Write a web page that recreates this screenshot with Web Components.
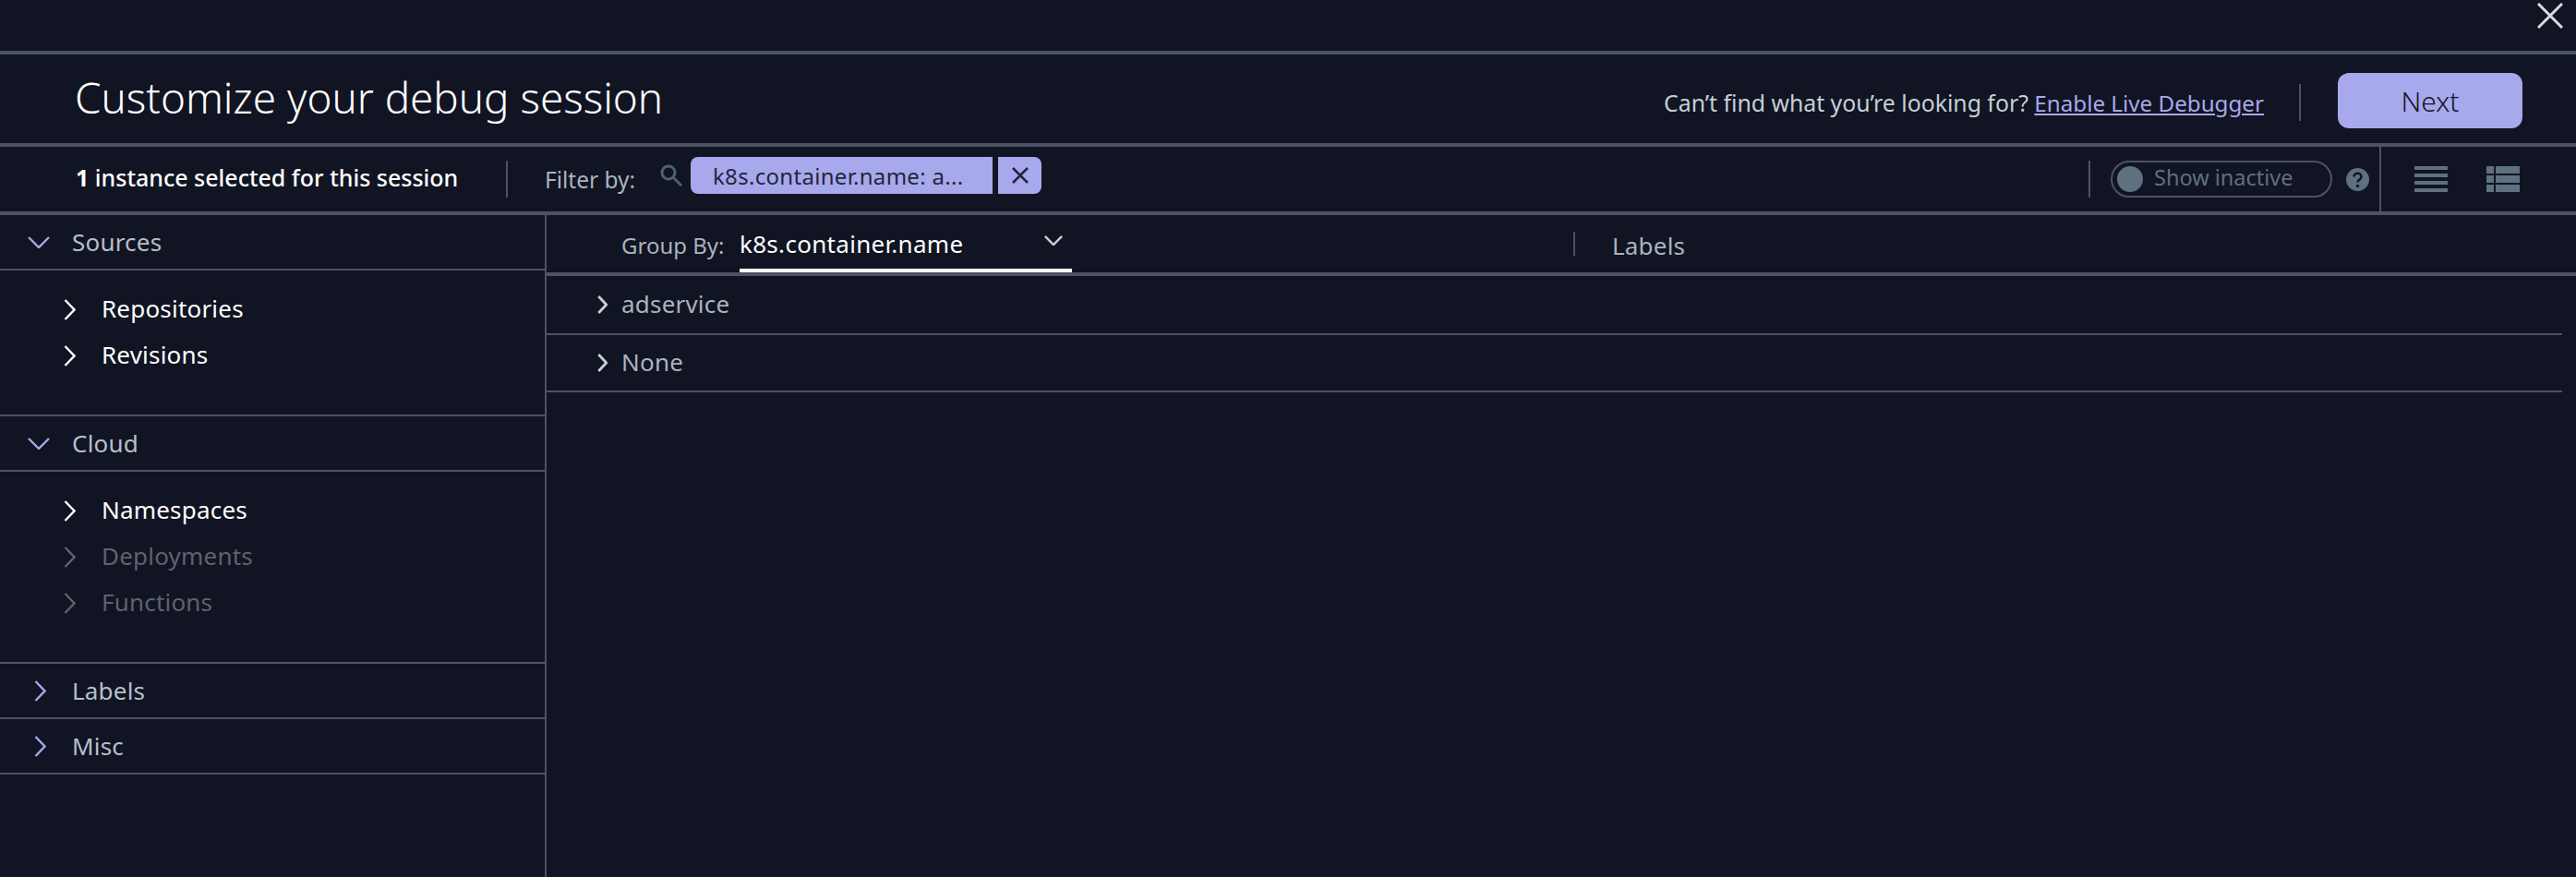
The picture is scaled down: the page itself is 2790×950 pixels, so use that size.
<!DOCTYPE html>
<html lang="en">
<head>
<meta charset="utf-8">
<title>Customize your debug session</title>
<style>
  html, body { margin: 0; height: 100%; background: #111422; overflow: hidden; }
  body { font-family: "Noto Sans", sans-serif; color: #c5cfd6; }
</style>
</head>
<body>
<debug-session></debug-session>

<script>
const chevron = (dir) => dir === "down"
  ? `<svg width="24" height="13" viewBox="0 0 24 13" fill="none" stroke="currentColor" stroke-width="2.400"><path d="M1 1l11 11L23 1"/></svg>`
  : `<svg width="13" height="23" viewBox="0 0 13 23" fill="none" stroke="currentColor" stroke-width="2.400"><path d="M1.500 1l10 10.500-10 10.500"/></svg>`;

class TreeItem extends HTMLElement {
  constructor() {
    super();
    this.attachShadow({mode: "open"});
  }
  connectedCallback() {
    this.shadowRoot.innerHTML = `
    <style>
      :host { display: flex; align-items: center; height: 50px; padding-left: 69px; color: #fff; font-size: 26px; letter-spacing: .2px; }
      :host([disabled]) { color: #5f626f; }
      svg { display: block; margin-right: 28px; }
      span { margin-top: -2px; }
    </style>
    ${chevron("right")}<span><slot></slot></span>`;
  }
}
customElements.define("tree-item", TreeItem);

class SideSection extends HTMLElement {
  constructor() {
    super();
    this.attachShadow({mode: "open"});
  }
  connectedCallback() {
    const open = this.hasAttribute("open");
    this.shadowRoot.innerHTML = `
    <style>
      :host { display: block; }
      .head { display: flex; align-items: center; height: 58px; border-bottom: 2px solid #4d5363; color: #b4c0cb; font-size: 26px; letter-spacing: .2px; box-sizing: content-box; }
      .icon { width: 78px; flex: none; color: #a8a8ec; display: flex; }
      .open .icon svg { margin-left: 30px; }
      .closed .icon svg { margin-left: 37px; }
      .body { padding: 17px 0 39px; border-bottom: 2px solid #4d5363; }
    </style>
    <div class="head ${open ? "open" : "closed"}"><span class="icon">${chevron(open ? "down" : "right")}</span><span>${this.getAttribute("label")}</span></div>
    ${open ? `<div class="body"><slot></slot></div>` : ""}`;
  }
}
customElements.define("side-section", SideSection);

class GroupRow extends HTMLElement {
  constructor() {
    super();
    this.attachShadow({mode: "open"});
  }
  connectedCallback() {
    this.shadowRoot.innerHTML = `
    <style>
      :host { display: flex; align-items: center; height: 62px; margin-right: 15px; padding-left: 55px; border-bottom: 2px solid #4d5363; color: #a9b4bf; font-size: 26px; letter-spacing: .2px; }
      svg { display: block; margin-right: 15px; width: 11px; height: 20px; color: #c5cfd6; stroke-width: 3.400; }
      span { margin-top: -2px; }
    </style>
    ${chevron("right")}<span><slot></slot></span>`;
  }
}
customElements.define("group-row", GroupRow);

class DebugHeader extends HTMLElement {
  constructor() {
    super();
    this.attachShadow({mode: "open"});
  }
  connectedCallback() {
    this.shadowRoot.innerHTML = `
    <style>
      :host { display: flex; align-items: center; height: 96px; padding: 0 58px 0 81px; border-bottom: 4px solid #4d5363; }
      h1 { margin: 0 0 4px; flex: 1; font-size: 45.800px; font-weight: 300; color: #fff; }
      .hint { margin-top: 8px; font-size: 24.800px; color: #c5cfd6; }
      a { color: #a8a8ec; font-size: 24.200px; }
      .sep { width: 2px; height: 40px; margin: 8px 40px 0 38px; background: #4d5363; }
      button { width: 200px; height: 60px; margin-top: 4px; border: 0; border-radius: 12px; background: #a8a8ec; color: #15172a; font: 300 30px "Noto Sans", sans-serif; }
    </style>
    <h1>Customize your debug session</h1>
    <span class="hint">Can’t find what you’re looking for? <a href="#">Enable Live Debugger</a></span>
    <span class="sep"></span>
    <button>Next</button>`;
  }
}
customElements.define("debug-header", DebugHeader);

class DebugToolbar extends HTMLElement {
  constructor() {
    super();
    this.attachShadow({mode: "open"});
  }
  connectedCallback() {
    this.shadowRoot.innerHTML = `
    <style>
      :host { display: flex; align-items: center; height: 70px; padding-left: 82px; border-bottom: 4px solid #4d5363; font-size: 24px; }
      .count { width: 466px; margin-bottom: 4px; color: #fff; font-size: 25px; font-weight: 500; }
      .sep { width: 2px; height: 40px; background: #4d5363; flex: none; }
      .filter { margin-left: 40px; width: 125px; color: #a9b4bf; font-size: 24.500px; }
      .search { display: block; margin: -8px 9px 0 0; }
      .chip { display: flex; align-items: center; height: 40px; margin-top: -8px; background: #a8a8ec; color: #23253b; }
      .name { width: 327px; box-sizing: border-box; padding-left: 24px; border-radius: 8px 0 0 8px; white-space: nowrap; letter-spacing: .3px; }
      .clear { width: 47px; justify-content: center; margin-left: 6px; border-radius: 0 8px 8px 0; }
      .fill { flex: 1; }
      .toggle { display: flex; align-items: center; box-sizing: border-box; width: 240px; height: 40px; margin-left: 22px; padding-left: 5px; border: 2px solid #4d5363; border-radius: 20px; color: #5f7080; font-size: 23.500px; }
      .toggle span:last-child { margin-top: -4px; }
      .knob { width: 28px; height: 28px; margin-right: 12px; border-radius: 50%; background: #5f7080; flex: none; }
      .help { display: block; margin: 0 11px 0 15px; }
      .tall { height: 70px; }
      .views { display: flex; gap: 42px; width: 211px; box-sizing: border-box; padding-left: 36px; }
      .views svg { display: block; }
    </style>
    <span class="count"><b>1</b> instance selected for this session</span>
    <span class="sep"></span>
    <span class="filter">Filter by:</span>
    <svg class="search" width="24" height="24" viewBox="0 0 24 24" fill="none" stroke="#4d6270" stroke-width="3"><circle cx="9" cy="9" r="7"/><path d="M14 14l9 9"/></svg>
    <span class="chip name">k8s.container.name: a...</span>
    <span class="chip clear"><svg width="20" height="20" viewBox="0 0 20 20" fill="none" stroke="#23253b" stroke-width="2.500"><path d="M2 2l16 16M18 2L2 18"/></svg></span>
    <span class="fill"></span>
    <span class="sep"></span>
    <span class="toggle"><span class="knob"></span><span>Show inactive</span></span>
    <svg class="help" width="25" height="25" viewBox="0 0 25 25"><circle cx="12.500" cy="12.500" r="12.500" fill="#5f7080"/><path d="M8.500 9.500c0-5 8-5 8 0 0 3-4 3-4 6" fill="none" stroke="#111422" stroke-width="2.600"/><circle cx="12.500" cy="19.500" r="1.700" fill="#111422"/></svg>
    <span class="sep tall"></span>
    <span class="views">
      <svg width="36" height="28" viewBox="0 0 36 28" fill="#5f7080"><rect width="36" height="4"/><rect y="8" width="36" height="4"/><rect y="16" width="36" height="4"/><rect y="24" width="36" height="4"/></svg>
      <svg width="36" height="28" viewBox="0 0 36 28" fill="#5f7080"><rect width="8" height="8"/><rect x="10" width="26" height="8"/><rect y="10" width="8" height="8"/><rect x="10" y="10" width="26" height="8"/><rect y="20" width="8" height="8"/><rect x="10" y="20" width="26" height="8"/></svg>
    </span>`;
  }
}
customElements.define("debug-toolbar", DebugToolbar);

class GroupTable extends HTMLElement {
  constructor() {
    super();
    this.attachShadow({mode: "open"});
  }
  connectedCallback() {
    this.shadowRoot.innerHTML = `
    <style>
      :host { display: block; flex: 1; font-size: 26px; }
      .head { display: flex; align-items: center; height: 62px; padding-left: 81px; border-bottom: 4px solid #4d5363; }
      .by { width: 128px; margin-top: 3px; color: #a9b4bf; font-size: 24px; }
      .select { display: flex; align-items: center; box-sizing: border-box; width: 360px; height: 62px; padding: 4px 10px 0 0; border-bottom: 4px solid #fff; color: #fff; justify-content: space-between; letter-spacing: .3px; }
      .select svg { display: block; color: #c5cfd6; width: 20px; height: 11px; margin-bottom: 8px; stroke-width: 3; }
      .sep { width: 2px; height: 26px; margin-left: 543px; margin-right: 40px; background: #4d5363; }
      .labels { margin-top: 4px; color: #a9b4bf; letter-spacing: .2px; }
    </style>
    <div class="head">
      <span class="by">Group By:</span>
      <span class="select">k8s.container.name ${chevron("down")}</span>
      <span class="sep"></span>
      <span class="labels">Labels</span>
    </div>
    <slot></slot>`;
  }
}
customElements.define("group-table", GroupTable);

class DebugSession extends HTMLElement {
  constructor() {
    super();
    this.attachShadow({mode: "open"});
  }
  connectedCallback() {
    this.shadowRoot.innerHTML = `
    <style>
      :host { display: flex; flex-direction: column; height: 950px; }
      .top { display: flex; justify-content: flex-end; height: 55px; padding-right: 14px; border-bottom: 4px solid #4d5363; }
      .top svg { display: block; margin-top: 3px; }
      .main { display: flex; flex: 1; }
      aside { width: 590px; border-right: 2px solid #4d5363; flex: none; }
      group-row + group-row { height: 60px; }
    </style>
    <div class="top"><svg width="28" height="28" viewBox="0 0 28 28" fill="none" stroke="#d5dde3" stroke-width="3"><path d="M1 1l26 26M27 1L1 27"/></svg></div>
    <debug-header></debug-header>
    <debug-toolbar></debug-toolbar>
    <div class="main">
      <aside>
        <side-section label="Sources" open>
          <tree-item>Repositories</tree-item>
          <tree-item>Revisions</tree-item>
        </side-section>
        <side-section label="Cloud" open>
          <tree-item>Namespaces</tree-item>
          <tree-item disabled>Deployments</tree-item>
          <tree-item disabled>Functions</tree-item>
        </side-section>
        <side-section label="Labels"></side-section>
        <side-section label="Misc"></side-section>
      </aside>
      <group-table>
        <group-row>adservice</group-row>
        <group-row>None</group-row>
      </group-table>
    </div>`;
  }
}
customElements.define("debug-session", DebugSession);
</script>
</body>
</html>
